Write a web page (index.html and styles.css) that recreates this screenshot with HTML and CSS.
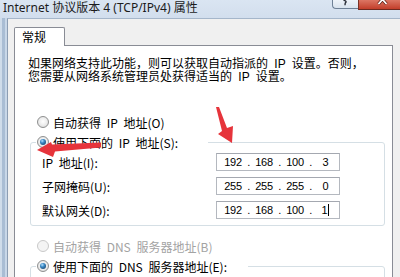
FILE: index.html
```html
<!DOCTYPE html>
<html lang="zh-CN">
<head>
<meta charset="utf-8">
<title>Internet 协议版本 4 (TCP/IPv4) 属性</title>
<link rel="stylesheet" href="styles.css">
</head>
<body>
<div class="window">
  <div class="titlebar">
    <span class="title">Internet 协议版本 4 (TCP/IPv4) 属性</span>
    <div class="caption-btns">
      <div class="btn-help">
        <svg width="25" height="8" viewBox="0 0 25 8"><path d="M10.5 0.3 Q14.5 1 12.2 3.2 L12 5.2" fill="none" stroke="#2b2f38" stroke-width="1.4"/></svg>
      </div>
      <div class="btn-close">
        <svg width="41" height="9" viewBox="0 0 41 9"><path d="M19.5 4 L23.5 -0.5 L27.5 4" fill="none" stroke="#5a1c12" stroke-width="3.2"/><path d="M19.5 4 L23.5 -0.5 L27.5 4" fill="none" stroke="#ffffff" stroke-width="1.8"/></svg>
      </div>
    </div>
  </div>
  <div class="frame">
    <div class="tabs"><div class="tab">常规</div></div>
    <div class="panel">
      <div class="intro">
        <div class="iline">如果网络支持此功能，则可以获取自动指派的 IP 设置。否则，</div>
        <div class="iline">您需要从网络系统管理员处获得适当的 IP 设置。</div>
      </div>

      <div class="opt first"><span class="radio"></span><span class="otext">自动获得 IP 地址(O)</span></div>
      <fieldset class="group g-ip">
        <legend><span class="radio checked"></span><span class="otext">使用下面的 IP 地址(S):</span></legend>
        <div class="rows">
          <div class="row"><span class="lbl">IP 地址(I):</span>
            <div class="ipbox"><span class="oct">192</span><span class="dot">.</span><span class="oct">168</span><span class="dot">.</span><span class="oct">100</span><span class="dot">.</span><span class="oct last">3</span></div>
          </div>
          <div class="row"><span class="lbl">子网掩码(U):</span>
            <div class="ipbox"><span class="oct">255</span><span class="dot">.</span><span class="oct">255</span><span class="dot">.</span><span class="oct">255</span><span class="dot">.</span><span class="oct last">0</span></div>
          </div>
          <div class="row"><span class="lbl">默认网关(D):</span>
            <div class="ipbox"><span class="oct">192</span><span class="dot">.</span><span class="oct">168</span><span class="dot">.</span><span class="oct">100</span><span class="dot">.</span><span class="oct last">1<span class="caret"></span></span></div>
          </div>
        </div>
      </fieldset>

      <div class="opt dns disabled"><span class="radio"></span><span class="otext">自动获得 DNS 服务器地址(B)</span></div>
      <fieldset class="group g-dns">
        <legend><span class="radio checked"></span><span class="otext">使用下面的 DNS 服务器地址(E):</span></legend>
        <div class="rows"><div class="row tall"></div></div>
      </fieldset>
    </div>
  </div>
</div>
<svg class="arrows" width="400" height="277" viewBox="0 0 400 277">
  <polygon points="37,150 51,142 52,144.5 101,142.5 101,147.5 55,151.5 53,157" fill="#e6343b"/>
  <polygon points="216,107 219,107 227,128 233,126 232,143 218,134 222,131" fill="#e6343b"/>
</svg>
</body>
</html>
```

FILE: styles.css
```css
html, body {
  margin: 0;
  padding: 0;
}

body {
  width: 400px;
  height: 277px;
  overflow: hidden;
  position: relative;
  font-family: "Noto Sans CJK SC", sans-serif;
  color: #000;
  background: linear-gradient(to right, #cfdcea 0, #cfdcea 2px, #a9bdd4 2px, #a9bdd4 5px, #c8d7e8 5px, #c8d7e8 7px, #f0f0f0 7px);
}

.window {
  display: flex;
  flex-direction: column;
  height: 100%;
}

.titlebar {
  height: 18px;
  flex: none;
  display: flex;
  background: linear-gradient(#dae5f2, #d2deed);
}

.title {
  padding-left: 3px;
  font: 12px/15px "Noto Sans", "Noto Sans CJK SC", sans-serif;
  color: #1b1b1b;
  white-space: nowrap;
}

.caption-btns {
  margin-left: auto;
  display: flex;
  align-items: flex-start;
}

.btn-help {
  width: 26px;
  height: 9px;
  box-sizing: border-box;
  border: 1px solid #6f8196;
  border-top: 0;
  border-right: 0;
  border-radius: 0 0 0 4px;
  background: linear-gradient(#eef3f9, #d9e3ee);
  overflow: hidden;
}

.btn-close {
  width: 42px;
  height: 10px;
  box-sizing: border-box;
  border-left: 1px solid #7a3326;
  border-bottom: 1px solid #6e2a20;
  background: linear-gradient(#dc7664, #c23e2a);
  overflow: hidden;
}

.btn-help svg, .btn-close svg {
  display: block;
}

.frame {
  flex: 1;
  min-height: 0;
  margin-left: 7px;
  border-top: 1px solid #a5b6ca;
  border-left: 1px solid #8c9db3;
  padding-left: 6px;
  background: #f0f0f0;
  display: flex;
  flex-direction: column;
}

.tabs {
  padding-top: 8px;
  display: flex;
}

.tab {
  width: 51px;
  height: 19px;
  box-sizing: border-box;
  border: 1px solid #898c95;
  border-bottom: 0;
  border-radius: 2px 2px 0 0;
  background: #fff;
  margin-bottom: -1px;
  position: relative;
  z-index: 1;
  padding-left: 7px;
  font-size: 12px;
  line-height: 17px;
}

.panel {
  flex: 1;
  min-height: 0;
  margin-right: 7px;
  border: 1px solid #898c95;
  border-bottom: 0;
  background: #fff;
  padding-left: 13px;
  overflow: hidden;
}

.intro {
  margin-top: 12px;
  font-family: "Liberation Sans", "Noto Sans CJK SC", sans-serif;
  font-size: 12px;
  white-space: nowrap;
  word-spacing: 3px;
}

.iline {
  height: 13px;
  line-height: 13px;
}

.opt {
  height: 20px;
  display: flex;
  align-items: center;
  margin-left: 8px;
  font-size: 12px;
  white-space: nowrap;
}

.opt.first {
  margin-top: 28px;
}

.opt.dns {
  margin-top: 10px;
}

.otext {
  word-spacing: 3px;
}

.opt.disabled {
  color: #a3a3a3;
}

.radio {
  flex: none;
  width: 12px;
  height: 12px;
  box-sizing: border-box;
  margin-left: 1px;
  margin-right: 4px;
  border-radius: 50%;
  border: 1px solid #8e8f8f;
  background: radial-gradient(circle at 50% 45%, #ffffff 0, #ebebeb 55%, #cfcfcf 100%);
  display: flex;
  align-items: center;
  justify-content: center;
}

.radio.checked::after {
  content: "";
  width: 6px;
  height: 6px;
  border-radius: 50%;
  background: radial-gradient(circle at 38% 32%, #b6e2ff 0, #3b8ac6 35%, #0f3256 100%);
}

.opt.disabled .radio {
  border-color: #c9c9c9;
  background: #f4f4f4;
}

fieldset.group {
  margin: 0 7px 0 2px;
  padding: 0;
  border: 1px solid #d5dfe5;
  border-radius: 3px;
  min-width: 0;
}

fieldset.group legend {
  margin-left: 5px;
  padding: 0;
  height: 20px;
  box-sizing: border-box;
  display: flex;
  align-items: center;
  font-size: 12px;
  white-space: nowrap;
}

.g-ip legend {
  width: 172px;
}

.g-dns legend {
  width: 212px;
}

.rows {
  padding: 1px 0 6px 11px;
  display: flex;
  flex-direction: column;
  gap: 6px;
}

.row {
  height: 18px;
  display: flex;
  align-items: center;
  font-size: 12px;
  white-space: nowrap;
}

.row.tall {
  height: 40px;
}

.lbl {
  width: 174px;
  flex: none;
  word-spacing: 3px;
}

.ipbox {
  width: 124px;
  height: 18px;
  box-sizing: border-box;
  border: 1px solid #b4b8bf;
  border-top-color: #a4a8b0;
  padding-left: 2px;
  display: flex;
  align-items: center;
  font: 11px/14px "Liberation Sans", Arial, sans-serif;
  letter-spacing: -0.3px;
  color: #000;
  background: #fff;
}

.oct {
  width: 28px;
  flex: none;
  text-align: center;
}

.oct.last {
  flex: 1;
  width: auto;
  display: flex;
  justify-content: center;
  align-items: center;
}

.dot {
  width: 3px;
  flex: none;
  text-align: right;
}

.caret {
  display: inline-block;
  width: 1px;
  height: 12px;
  margin-left: 1px;
  background: #000;
}

.arrows {
  position: absolute;
  top: 0;
  left: 0;
  pointer-events: none;
}
```
